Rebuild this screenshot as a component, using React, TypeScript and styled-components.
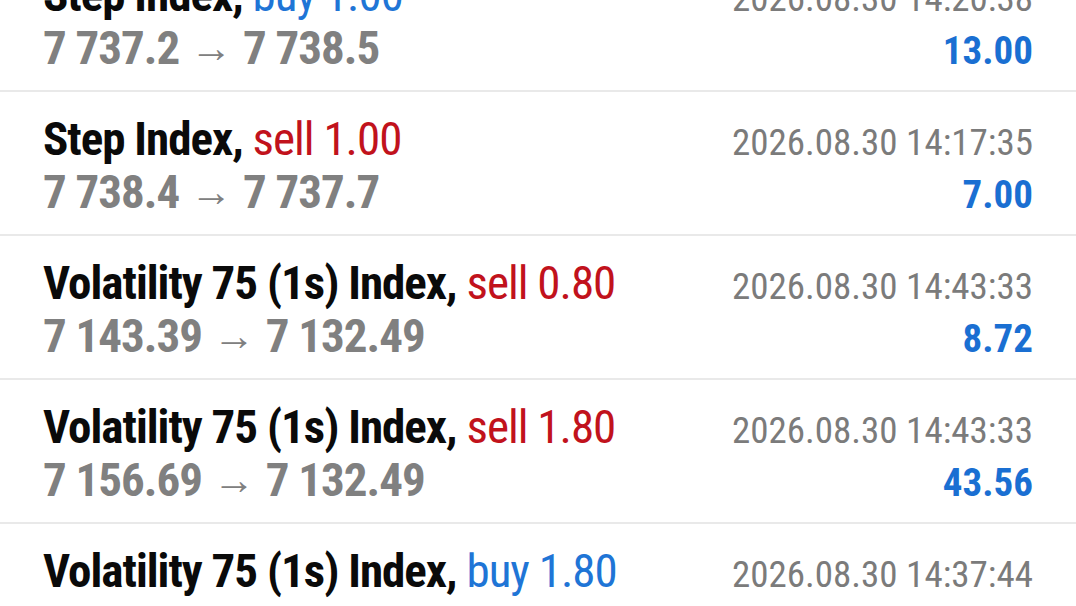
import React from "react";
import styled, { createGlobalStyle } from "styled-components";

type Deal = {
  symbol: string;
  side: "buy" | "sell";
  volume: string;
  open: string;
  close: string;
  time: string;
  profit: string;
};

const deals: Deal[] = [
  { symbol: "Step Index", side: "buy", volume: "1.00", open: "7 737.2", close: "7 738.5", time: "2026.08.30 14:20:38", profit: "13.00" },
  { symbol: "Step Index", side: "sell", volume: "1.00", open: "7 738.4", close: "7 737.7", time: "2026.08.30 14:17:35", profit: "7.00" },
  { symbol: "Volatility 75 (1s) Index", side: "sell", volume: "0.80", open: "7 143.39", close: "7 132.49", time: "2026.08.30 14:43:33", profit: "8.72" },
  { symbol: "Volatility 75 (1s) Index", side: "sell", volume: "1.80", open: "7 156.69", close: "7 132.49", time: "2026.08.30 14:43:33", profit: "43.56" },
  { symbol: "Volatility 75 (1s) Index", side: "buy", volume: "1.80", open: "7 133.12", close: "7 158.42", time: "2026.08.30 14:37:44", profit: "45.54" },
];

const GlobalStyle = createGlobalStyle`
  html, body {
    margin: 0;
    padding: 0;
    background: #fff;
    overflow: hidden;
  }
  body {
    font-family: "Roboto", "Noto Sans", sans-serif;
    font-stretch: 75%;
  }
`;

const Screen = styled.div`
  width: 1076px;
  height: 606px;
  overflow: hidden;
  background: #fff;
`;

// list is scrolled, first row partly hidden above the top edge
const List = styled.div`
  margin-top: -52px;
`;

const Row = styled.div`
  display: grid;
  grid-template-columns: 1fr auto;
  grid-template-rows: 53px 53px;
  align-items: baseline;
  height: 144px;
  box-sizing: border-box;
  padding: 20px 43px 0 43px;
  border-bottom: 2px solid #e9e9e9;
`;

const Title = styled.div`
  font-size: 47px;
  line-height: 53px;
  font-weight: 700;
  letter-spacing: -1px;
  color: #0a0a0a;
  white-space: nowrap;
`;

const Side = styled.span<{ $side: "buy" | "sell" }>`
  font-weight: 400;
  color: ${({ $side }) => ($side === "buy" ? "#1f75d6" : "#c1121c")};
`;

const Prices = styled.div`
  font-size: 47px;
  line-height: 53px;
  font-weight: 700;
  letter-spacing: -1px;
  color: #808080;
  white-space: nowrap;
`;

const Arrow = styled.span`
  font-size: 42px;
  font-weight: 400;
  letter-spacing: 0;
  margin: 0 1px;
  vertical-align: 2px;
`;

const Time = styled.div`
  font-size: 37px;
  line-height: 53px;
  color: #7b7b7b;
  text-align: right;
  white-space: nowrap;
`;

const Profit = styled.div`
  font-size: 39px;
  line-height: 53px;
  font-weight: 700;
  color: #1a6fd2;
  text-align: right;
`;

const DealRow = ({ deal }: { deal: Deal }) => (
  <Row>
    <Title>
      {deal.symbol},{" "}
      <Side $side={deal.side}>
        {deal.side} {deal.volume}
      </Side>
    </Title>
    <Time>{deal.time}</Time>
    <Prices>
      {deal.open} <Arrow>→</Arrow> {deal.close}
    </Prices>
    <Profit>{deal.profit}</Profit>
  </Row>
);

const App = () => (
  <Screen>
    <GlobalStyle />
    <List>
      {deals.map((d, i) => (
        <DealRow key={i} deal={d} />
      ))}
    </List>
  </Screen>
);

export default App;
